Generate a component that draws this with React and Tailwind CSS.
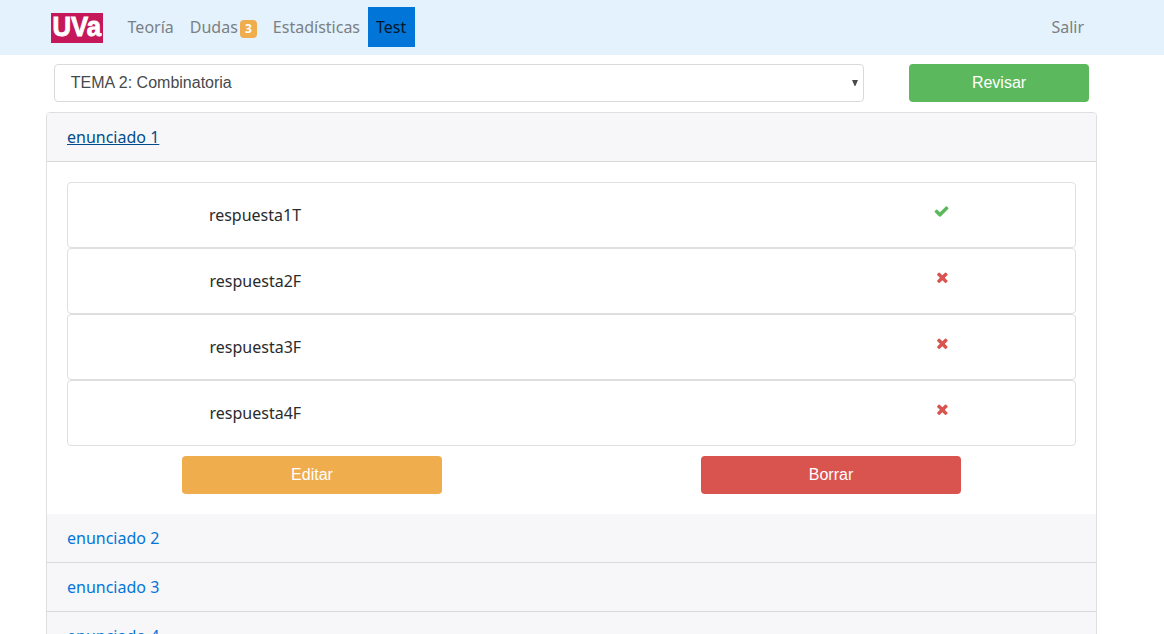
const CHECK =
  "M1671 566q0 40-28 68l-724 724-136 136q-28 28-68 28t-68-28l-136-136-362-362q-28-28-28-68t28-68l136-136q28-28 68-28t68 28l294 295 656-657q28-28 68-28t68 28l136 136q28 28 28 68z";
const TIMES =
  "M1490 1322q0 40-28 68l-136 136q-28 28-68 28t-68-28l-294-294-294 294q-28 28-68 28t-68-28l-136-136q-28-28-28-68t28-68l294-294-294-294q-28-28-28-68t28-68l136-136q28-28 68-28t68 28l294 294 294-294q28-28 68-28t68 28l136 136q28 28 28 68t-28 68l-294 294 294 294q28 28 28 68z";

const answers = [
  { text: "respuesta1T", correct: true },
  { text: "respuesta2F", correct: false },
  { text: "respuesta3F", correct: false },
  { text: "respuesta4F", correct: false },
];

function Logo() {
  return (
    <svg width="52" height="30" viewBox="0 0 52 30" className="mr-[16.6px] mt-0.5 block bg-[#c5185a]">
      <text
        x="1.4"
        y="23.4"
        textLength="48.6"
        lengthAdjust="spacingAndGlyphs"
        className="fill-white stroke-white stroke-[0.9px] font-['Liberation_Sans',sans-serif] text-[27px] font-bold"
      >
        UVa
      </text>
    </svg>
  );
}

function Answer({ text, correct }) {
  return (
    <li className="flex h-[66px] items-start rounded border border-[#dfdfdf] pt-5">
      <span className={correct ? "w-[374px] text-center" : "w-[374.6px] text-center"}>{text}</span>
      <span className="flex flex-1 justify-end pr-[125px]">
        <svg
          viewBox={correct ? "50 -30 1792 1792" : "-40 -20 1792 1792"}
          className={correct ? "size-4 fill-[#5cb85c]" : "size-4 fill-[#d9534f]"}
        >
          <path d={correct ? CHECK : TIMES} />
        </svg>
      </span>
    </li>
  );
}

function Header({ children, open }) {
  return (
    <div className="h-[49px] border-b border-[#d8d9da] bg-[#f7f7f9] px-5 py-3">
      <a href="#" className={open ? "text-[#014c8c] underline" : "text-[#0275d8]"}>
        {children}
      </a>
    </div>
  );
}

const button =
  "h-[38px] rounded text-center font-['Liberation_Sans',sans-serif] text-white";

export default function App() {
  return (
    <div className="h-[634px] overflow-hidden bg-white font-['Noto_Sans',sans-serif] text-base text-[#292b2c]">
      <nav className="flex h-[55px] items-center bg-[#e3f2fd] pb-px pl-[51px] pr-[72px] text-[#7b8083]">
        <Logo />
        <a href="#" className="px-2">Teoría</a>
        <a href="#" className="flex items-center px-2">
          Dudas
          <span className="ml-0.5 mt-[3px] flex h-[18px] w-[17px] items-center justify-center rounded bg-[#f0ad4e] text-xs font-bold text-white">
            3
          </span>
        </a>
        <a href="#" className="px-2">Estadísticas</a>
        <a href="#" className="flex h-10 w-[47px] items-center bg-[#0275d8] px-2 text-[#04172a]">Test</a>
        <a href="#" className="ml-auto px-2">Salir</a>
      </nav>

      <div className="flex pl-[54px] pt-[9px]">
        <div className="flex h-[38px] w-[810px] items-center justify-between rounded border border-[#d9d9d9] pl-[15.8px] pr-1 font-['Liberation_Sans',sans-serif] text-[#464a4c]">
          <span>TEMA 2: Combinatoria</span>
          <svg viewBox="0 0 8 8" className="size-2 fill-[#464a4c]">
            <path d="M1 1h6L4.4 7h-.8z" />
          </svg>
        </div>
        <button className={`${button} ml-[45px] w-[180px] bg-[#5cb85c]`}>Revisar</button>
      </div>

      <section className="ml-[46px] mt-[10px] w-[1051px] overflow-hidden rounded border border-[#dfdfdf]">
        <Header open>enunciado 1</Header>
        <div className="p-5">
          <ul>
            {answers.map((a) => (
              <Answer key={a.text} {...a} />
            ))}
          </ul>
          <div className="mt-[10px] flex pl-[115px]">
            <button className={`${button} w-[260px] bg-[#f0ad4e]`}>Editar</button>
            <button className={`${button} ml-[259px] w-[260px] bg-[#d9534f]`}>Borrar</button>
          </div>
        </div>
        <Header>enunciado 2</Header>
        <Header>enunciado 3</Header>
        <Header>enunciado 4</Header>
      </section>
    </div>
  );
}
